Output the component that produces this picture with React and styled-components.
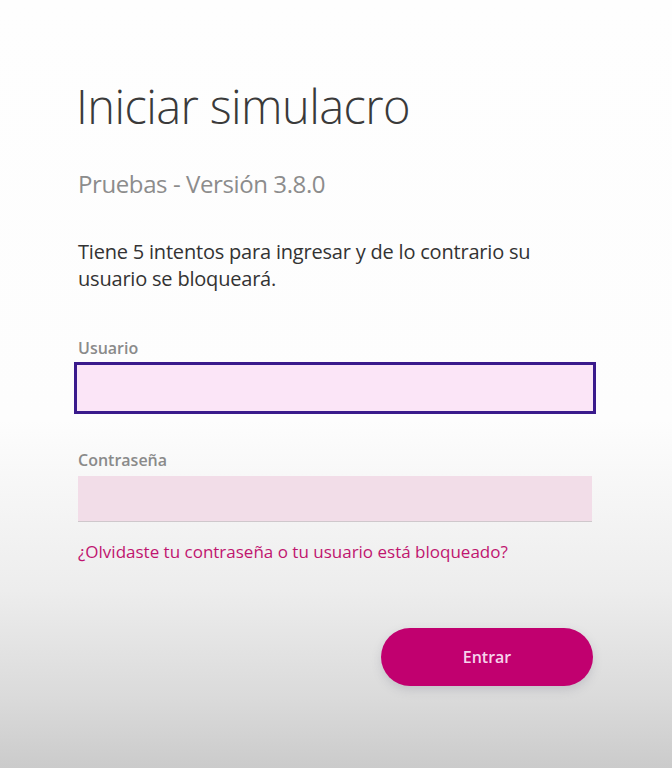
import React from "react";
import styled, { createGlobalStyle } from "styled-components";

const Global = createGlobalStyle`
  html, body {
    margin: 0;
    padding: 0;
  }
  body {
    font-family: "Open Sans", "Liberation Sans", sans-serif;
    background: linear-gradient(180deg, #fefefe 0px, #fdfdfd 420px, #ededed 590px, #dadada 700px, #cbcbcb 768px);
    min-height: 768px;
  }
`;

const Page = styled.div`
  width: 672px;
  height: 768px;
  box-sizing: border-box;
  padding: 76px 78px 0 78px;
  display: flex;
  flex-direction: column;
`;

const Title = styled.h1`
  margin: 0 0 0 -2px;
  font-size: 47px;
  font-weight: 300;
  color: #3a3a3a;
  letter-spacing: -0.6px;
  line-height: 60px;
`;

const Version = styled.div`
  margin-top: 34px;
  font-size: 24px;
  color: #8c8c8c;
  line-height: 28px;
  letter-spacing: -0.4px;
`;

const Notice = styled.p`
  margin: 40px 0 0 0;
  font-size: 20px;
  font-weight: 500;
  color: #333;
  line-height: 27px;
  width: 480px;
  letter-spacing: -0.2px;
`;

const Field = styled.div`
  display: flex;
  flex-direction: column;
  margin-top: ${({ $top }) => $top}px;
`;

const Label = styled.label`
  font-size: 16px;
  font-weight: 600;
  color: #8a8a8a;
  line-height: 20px;
  margin-bottom: ${({ $gap }) => $gap}px;
`;

const Input = styled.input`
  box-sizing: border-box;
  height: ${({ $focused }) => ($focused ? 52 : 46)}px;
  width: ${({ $focused }) => ($focused ? 522 : 514)}px;
  margin-left: ${({ $focused }) => ($focused ? -4 : 0)}px;
  border: ${({ $focused }) => ($focused ? "3px solid #3a1a8c" : "none")};
  border-bottom: ${({ $focused }) => ($focused ? "3px solid #3a1a8c" : "1px solid #cfc8cc")};
  background: ${({ $focused }) => ($focused ? "#fbe5f7" : "#f2dde8")};
  outline: none;
  font-size: 16px;
  padding: 0 12px;
  font-family: inherit;
`;

const Forgot = styled.a`
  margin-top: 19px;
  font-size: 17px;
  color: #c0156f;
  text-decoration: none;
  line-height: 22px;
  letter-spacing: 0;
`;

const Actions = styled.div`
  display: flex;
  justify-content: flex-end;
  margin-top: 65px;
`;

const Button = styled.button`
  width: 212px;
  height: 58px;
  margin-right: 1px;
  border: none;
  border-radius: 29px;
  background: #c1006f;
  color: #f6d4ec;
  font-size: 16px;
  font-weight: 600;
  font-family: inherit;
  box-shadow: 0 4px 10px rgba(120, 120, 140, 0.25);
`;

export default function App() {
  return (
    <>
      <Global />
      <Page>
        <Title>Iniciar simulacro</Title>
        <Version>Pruebas - Versión 3.8.0</Version>
        <Notice>
          Tiene 5 intentos para ingresar y de lo contrario su usuario se
          bloqueará.
        </Notice>
        <Field $top={46}>
          <Label $gap={4}>Usuario</Label>
          <Input $focused type="text" />
        </Field>
        <Field $top={36}>
          <Label $gap={6}>Contraseña</Label>
          <Input type="password" />
        </Field>
        <Forgot href="#">¿Olvidaste tu contraseña o tu usuario está bloqueado?</Forgot>
        <Actions>
          <Button>Entrar</Button>
        </Actions>
      </Page>
    </>
  );
}
